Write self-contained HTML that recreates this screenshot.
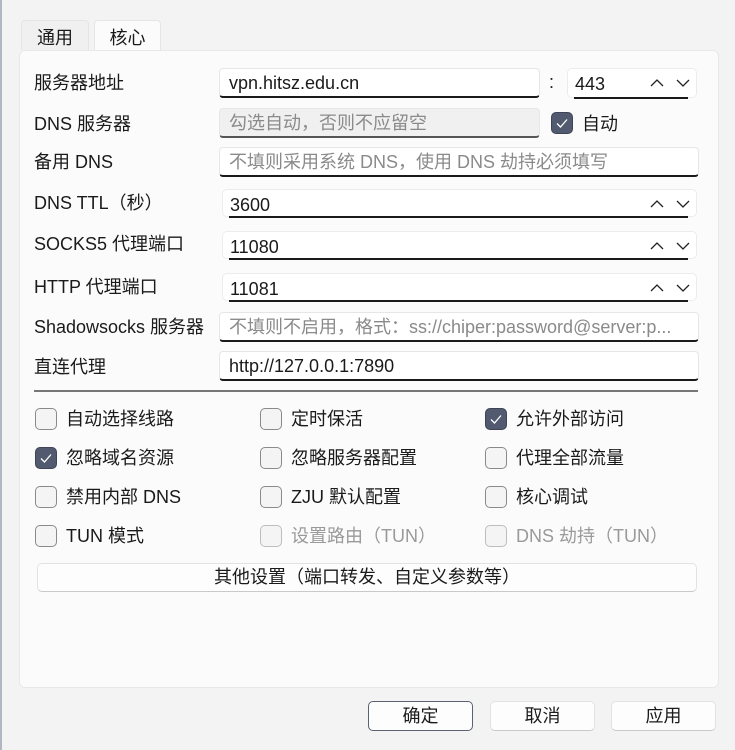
<!DOCTYPE html><html><head><meta charset="utf-8"><style>
*{box-sizing:border-box;margin:0;padding:0}
body{width:735px;height:750px;background:#f3f3f3;font-family:"Liberation Sans","Noto Sans CJK SC",sans-serif;font-size:18px;color:#1a1a1a;position:relative;overflow:hidden}
.a{position:absolute}
.tab{position:absolute;top:20px;height:30px;border:1px solid #e5e5e5;border-bottom:none;border-radius:4px 4px 0 0;padding:3px 0 0 0;text-align:center}
.panel{left:19px;top:50px;width:700px;height:638px;background:#fbfbfb;border:1px solid #e8e8e8;border-radius:6px}
.lbl{position:absolute;left:34px;line-height:22px}
.in{position:absolute;background:#fff;border:1px solid #e6e6e6;border-bottom:2px solid #1a1a1a;border-radius:4px;padding-left:9px;line-height:29px;overflow:hidden;white-space:nowrap}
.ph{color:#8a8a8a}
.sp{position:absolute;background:#fff;border:1px solid #ececec;border-radius:5px}
.sp .u{position:absolute;left:6px;right:8px;bottom:-2px;height:2px;background:#1a1a1a}
.sp .t{position:absolute;left:7px;top:3px;line-height:24px}
.arr{position:absolute;right:6px;top:7px}
.cb{position:absolute;width:22px;height:22px;border:1px solid #8a8a8a;border-radius:5px;background:#f4f4f4}
.cb.on{background:#515a6e;border-color:#3e4556}
.cl{position:absolute;line-height:22px}
.dis{color:#9a9a9a}
.cb.d{border-color:#bdbdbd}
.btn{position:absolute;background:#fdfdfd;border:1px solid #e2e2e2;border-bottom-color:#c9c9c9;border-radius:5px;text-align:center}
</style></head><body>
<div class="a" style="left:0;top:0;width:2px;height:750px;background:#b0b7c3"></div>
<div class="tab" style="left:21px;width:68px;background:#f0f0f0">通用</div>
<div class="tab" style="left:94px;width:67px;background:#fbfbfb">核心</div>
<div class="a panel"></div>

<div class="lbl" style="top:72px">服务器地址</div>
<div class="in" style="left:219px;top:68px;width:321px;height:30px">vpn.hitsz.edu.cn</div>
<div class="a" style="left:549px;top:72px">:</div>
<div class="sp" style="left:567px;top:68px;width:130px;height:30px"><div class="t">443</div><div class="u"></div>
<svg class="arr" width="40" height="14" viewBox="0 0 40 14"><path d="M1 10L7 4L13 10M27 4L33 10L39 4" fill="none" stroke="#222" stroke-width="1.3"/></svg></div>

<div class="lbl" style="top:113px">DNS 服务器</div>
<div class="in ph" style="left:219px;top:108px;width:321px;height:30px;background:#f0f0f0;border-bottom-color:#555">勾选自动，否则不应留空</div>
<div class="cb on" style="left:551px;top:112px"><svg width="20" height="20" viewBox="0 0 20 20"><path d="M5 10.5L8.5 14L15 6.5" fill="none" stroke="#fff" stroke-width="1.3"/></svg></div>
<div class="a" style="left:582px;top:113px;line-height:22px">自动</div>

<div class="lbl" style="top:151px">备用 DNS</div>
<div class="in ph" style="left:219px;top:147px;width:480px;height:30px">不填则采用系统 DNS，使用 DNS 劫持必须填写</div>

<div class="lbl" style="top:192px">DNS TTL（秒）</div>
<div class="sp" style="left:222px;top:189px;width:475px;height:28px"><div class="t">3600</div><div class="u"></div>
<svg class="arr" width="40" height="14" viewBox="0 0 40 14"><path d="M1 10L7 4L13 10M27 4L33 10L39 4" fill="none" stroke="#222" stroke-width="1.3"/></svg></div>

<div class="lbl" style="top:233px">SOCKS5 代理端口</div>
<div class="sp" style="left:222px;top:231px;width:475px;height:28px"><div class="t">11080</div><div class="u"></div>
<svg class="arr" width="40" height="14" viewBox="0 0 40 14"><path d="M1 10L7 4L13 10M27 4L33 10L39 4" fill="none" stroke="#222" stroke-width="1.3"/></svg></div>

<div class="lbl" style="top:276px">HTTP 代理端口</div>
<div class="sp" style="left:222px;top:273px;width:475px;height:28px"><div class="t">11081</div><div class="u"></div>
<svg class="arr" width="40" height="14" viewBox="0 0 40 14"><path d="M1 10L7 4L13 10M27 4L33 10L39 4" fill="none" stroke="#222" stroke-width="1.3"/></svg></div>

<div class="lbl" style="top:316px">Shadowsocks 服务器</div>
<div class="in ph" style="left:219px;top:312px;width:480px;height:30px">不填则不启用，格式：ss://chiper:password@server:p...</div>

<div class="lbl" style="top:356px">直连代理</div>
<div class="in" style="left:219px;top:351px;width:480px;height:30px">http://127.0.0.1:7890</div>

<div class="a" style="left:34px;top:390px;width:664px;height:2px;background:#777"></div>

<div class="cb" style="left:35px;top:408px"></div><div class="cl" style="left:66px;top:408px">自动选择线路</div>
<div class="cb" style="left:260px;top:408px"></div><div class="cl" style="left:291px;top:408px">定时保活</div>
<div class="cb on" style="left:485px;top:408px"><svg width="20" height="20" viewBox="0 0 20 20"><path d="M5 10.5L8.5 14L15 6.5" fill="none" stroke="#fff" stroke-width="1.3"/></svg></div><div class="cl" style="left:516px;top:408px">允许外部访问</div>

<div class="cb on" style="left:35px;top:447px"><svg width="20" height="20" viewBox="0 0 20 20"><path d="M5 10.5L8.5 14L15 6.5" fill="none" stroke="#fff" stroke-width="1.3"/></svg></div><div class="cl" style="left:66px;top:447px">忽略域名资源</div>
<div class="cb" style="left:260px;top:447px"></div><div class="cl" style="left:291px;top:447px">忽略服务器配置</div>
<div class="cb" style="left:485px;top:447px"></div><div class="cl" style="left:516px;top:447px">代理全部流量</div>

<div class="cb" style="left:35px;top:486px"></div><div class="cl" style="left:66px;top:486px">禁用内部 DNS</div>
<div class="cb" style="left:260px;top:486px"></div><div class="cl" style="left:291px;top:486px">ZJU 默认配置</div>
<div class="cb" style="left:485px;top:486px"></div><div class="cl" style="left:516px;top:486px">核心调试</div>

<div class="cb" style="left:35px;top:525px"></div><div class="cl" style="left:66px;top:525px">TUN 模式</div>
<div class="cb d" style="left:260px;top:525px"></div><div class="cl dis" style="left:291px;top:525px">设置路由（TUN）</div>
<div class="cb d" style="left:485px;top:525px"></div><div class="cl dis" style="left:516px;top:525px">DNS 劫持（TUN）</div>

<div class="btn" style="left:37px;top:563px;width:660px;height:29px;line-height:27px">其他设置（端口转发、自定义参数等）</div>

<div class="btn" style="left:368px;top:701px;width:105px;height:30px;line-height:28px;border:1.5px solid #5a6172">确定</div>
<div class="btn" style="left:490px;top:701px;width:105px;height:30px;line-height:28px">取消</div>
<div class="btn" style="left:611px;top:701px;width:105px;height:30px;line-height:28px">应用</div>
</body></html>
